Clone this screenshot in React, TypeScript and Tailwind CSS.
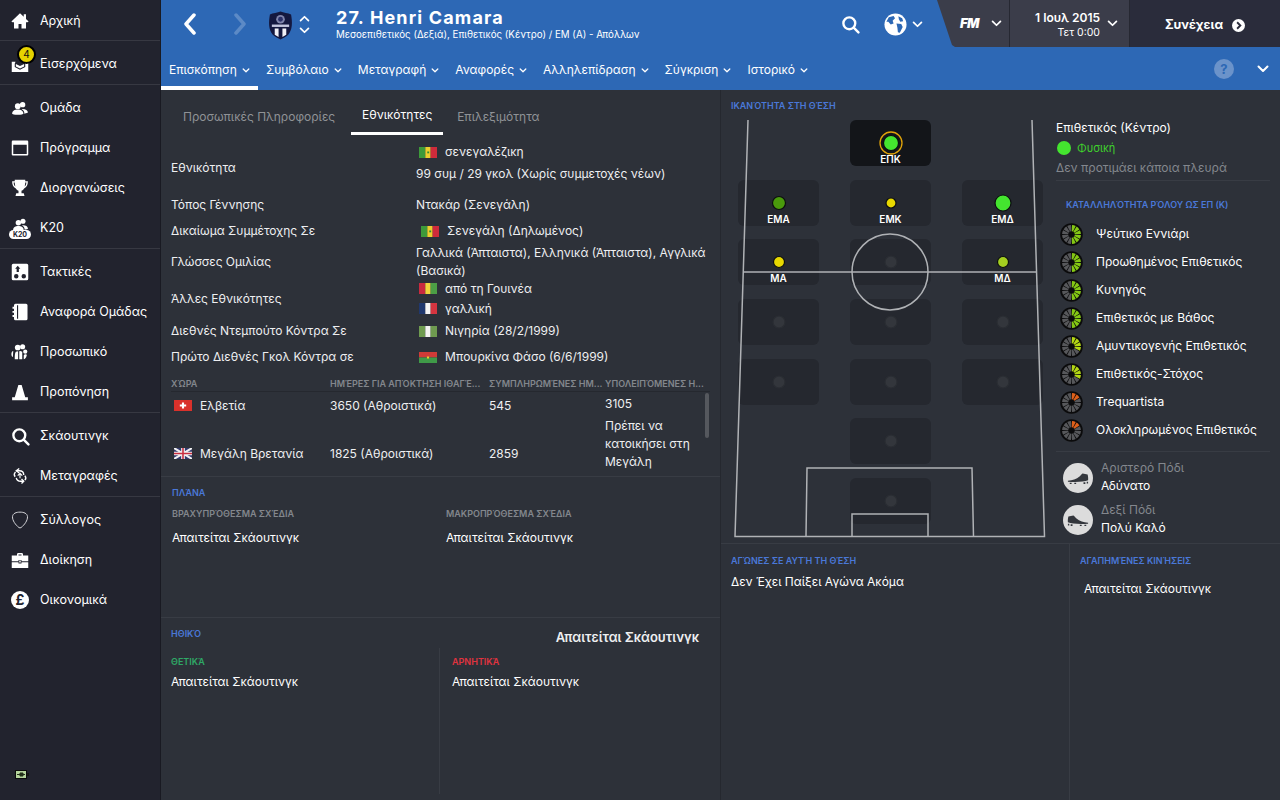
import React from "react";

const UsersGlyph = () => (
  <>
    <circle cx="15.5" cy="7.5" r="3.6" />
    <circle cx="9" cy="9.5" r="3.8" />
    <path d="M1.5 19.5c0-3.5 3.4-5.5 7.5-5.5s7.5 2 7.5 5.5c0 .6-3 1.5-7.5 1.5s-7.5-.9-7.5-1.5z" />
    <path d="M17.8 19.5c.2-2.7-1.2-4.7-3.6-6 .5-.2 1-.3 1.5-.3 3.6 0 6.8 1.7 6.8 4.6 0 .7-1.900 1.500-4.700 1.700z" />
  </>
);

const navIcons: Record<string, React.ReactNode> = {
  home: <path d="M12 1.500 0.500 12.500l1.500 1H4V22h6v-6h4v6h6v-8.500h2l1.500-1L20 9.200V3h-3v3.400z" />,
  inbox: <path d="M1 9h5l-1 2.500V16l7 3.500 7-3.500v-4.500L18 9h5v13.500H1zM6.500 12 12 14.500 17.500 12v3.200L12 18l-5.500-2.800z" fillRule="evenodd" />,
  users: <UsersGlyph />,
  calendar: <path fillRule="evenodd" d="M2.500 2h19A1.500 1.500 0 0 1 23 3.500v17a1.500 1.500 0 0 1-1.500 1.500h-19A1.500 1.500 0 0 1 1 20.500v-17A1.500 1.500 0 0 1 2.500 2zM3 7.500V20h18V7.500z" />,
  trophy: <path fillRule="evenodd" d="M5 1h14v2h3.500c0 5-1.500 8-5 9.500-.8 1.500-2 2.500-3.500 3V19h3l1 3.500H6l1-3.500h3v-3.500c-1.500-.5-2.700-1.500-3.500-3C3 11 1.500 8 1.500 3H5zM3.500 4.500c.1 2.500.8 4.200 2.300 5.400-.4-1.500-.7-3.400-.8-5.400zM20.500 4.500H19c-.1 2-.4 3.900-.8 5.400 1.500-1.200 2.200-2.900 2.300-5.400z" />,
  tactics: <path fillRule="evenodd" d="M3 1h18a2 2 0 0 1 2 2v18a2 2 0 0 1-2 2H3a2 2 0 0 1-2-2V3a2 2 0 0 1 2-2zM9 3.500 5.500 7.500h2V12h3V7.500h2zM7 14.500a3 3 0 1 0 0 6 3 3 0 0 0 0-6zM17 14.500a3 3 0 1 0 0 6 3 3 0 0 0 0-6z" />,
  report: <path fillRule="evenodd" d="M6 1h14a2 2 0 0 1 2 2v18a2 2 0 0 1-2 2H6a2 2 0 0 1-2-2v-2.500H2V16h2v-3H2v-2.500h2v-3H2V5h2V3a2 2 0 0 1 2-2zM8 3v18h1.500V3z" />,
  staff: (
    <>
      <circle cx="9" cy="6" r="3.800" />
      <circle cx="15.500" cy="5" r="3.400" />
      <circle cx="19" cy="11.500" r="2.800" />
      <path d="M3 10.500c-1.500 0-2.500 2-2.500 4.500 0 2 1 3.500 2 3.500zM5 21.500h4.500V11l-3 .5C5 13 5 17 5 21.500zM11 21.500h4V11.500l-2.500-1-1.500.5zM17 21.500c1.500 0 3-1.500 4-5 .5-1.500-1-1.500-2-1.500-1.500 0-2 1-2 2.500z" />
    </>
  ),
  cone: <path d="M9.800 2.500h4.400L19 19h3.500v4h-21v-4H5z" />,
  briefcase: <path fillRule="evenodd" d="M8 4.500C8 3 9 2.500 10 2.500h4c1 0 2 .5 2 2V6h7v7.500H14V12h-4v1.500H1V6h7zM10 4.500V6h4V4.500zM1 15h9v1.500h4V15h9v7.500H1zM11 12.800h2v2.500h-2z" />,
};

const NavIcon = ({ name }: { name: string }) => (
  <svg viewBox="0 0 24 24" className="w-[18px] h-[18px] fill-white">
    {navIcons[name]}
  </svg>
);

const SearchIcon = () => (
  <svg viewBox="0 0 24 24" className="w-[19px] h-[19px] fill-none stroke-white stroke-[3]">
    <circle cx="10.500" cy="10.500" r="7.500" />
    <path d="M16 16l6 6" strokeLinecap="round" />
  </svg>
);

const TransferIcon = () => (
  <svg viewBox="0 0 24 24" className="w-[18px] h-[20px] fill-none stroke-white stroke-[1.800]">
    <path d="M11 2 7 5l4 3" />
    <path d="M7 5h4c4 0 6 2.500 6 5.500M5.500 13c-1.500-2-1.500-4.500.5-6.500" />
    <path d="M14 22l3-3-3-3" />
    <path d="M17 19h-4c-3.500 0-5.500-2-6-4.500M18.500 11.500c1.500 2 1.500 4.500 0 6" />
    <path d="M9 11.500l3-3 3 3M12 9v6" strokeWidth="1.500" />
  </svg>
);

const ShieldIcon = () => (
  <svg viewBox="0 0 24 24" className="w-[18px] h-[18px] fill-none stroke-[#d8d8dc] stroke-[1.300]">
    <path d="M12 1.500c5 0 9.500 1.500 10 6 .3 5-4 11-8.500 14.500a2.500 2.500 0 0 1-3 0C6 18.500 1.700 12.500 2 7.500c.5-4.500 5-6 10-6z" />
  </svg>
);

type SideItem = { label: string; icon: React.ReactNode };

const sideGroups: SideItem[][] = [
  [{ label: "Αρχική", icon: <NavIcon name="home" /> }],
  [{ label: "Εισερχόμενα", icon: <NavIcon name="inbox" /> }],
  [
    { label: "Ομάδα", icon: <NavIcon name="users" /> },
    { label: "Πρόγραμμα", icon: <NavIcon name="calendar" /> },
    { label: "Διοργανώσεις", icon: <NavIcon name="trophy" /> },
    {
      label: "Κ20",
      icon: (
        <div className="relative w-[22px] h-[22px] flex justify-center">
          <svg viewBox="0 0 24 24" className="w-[17px] h-[17px] fill-white -mt-[1px]">
            <UsersGlyph />
          </svg>
          <span className="absolute left-0 bottom-0 w-[22px] h-[9px] rounded-full bg-white text-[#22232e] text-[7px] leading-[9px] font-bold text-center">
            Κ20
          </span>
        </div>
      ),
    },
  ],
  [
    { label: "Τακτικές", icon: <NavIcon name="tactics" /> },
    { label: "Αναφορά Ομάδας", icon: <NavIcon name="report" /> },
    { label: "Προσωπικό", icon: <NavIcon name="staff" /> },
    { label: "Προπόνηση", icon: <NavIcon name="cone" /> },
  ],
  [
    { label: "Σκάουτινγκ", icon: <SearchIcon /> },
    { label: "Μεταγραφές", icon: <TransferIcon /> },
  ],
  [
    { label: "Σύλλογος", icon: <ShieldIcon /> },
    { label: "Διοίκηση", icon: <NavIcon name="briefcase" /> },
    {
      label: "Οικονομικά",
      icon: (
        <span className="w-[18px] h-[18px] rounded-full bg-white text-[#22232e] text-[14px] leading-[18px] font-bold text-center">
          £
        </span>
      ),
    },
  ],
];

const Sidebar = () => (
  <aside className="relative w-[161px] shrink-0 bg-[#22232e] border-r border-[#191a22]">
    {sideGroups.map((group, i) => (
      <div
        key={i}
        className={`${i === 0 ? "" : "pt-[2px] pb-[1px]"} ${i === 5 ? "" : "border-b border-[#373842]"}`}
      >
        {group.map((item) => (
          <div key={item.label} className="relative h-10 pt-[2px] flex items-center text-white text-[12.500px]">
            <span className="w-[40px] flex justify-center">{item.icon}</span>
            <span>{item.label}</span>
            {item.label === "Εισερχόμενα" && (
              <span className="absolute left-[17px] top-[2px] w-[19px] h-[19px] rounded-full bg-[#e6d200] border-2 border-black text-[#111] text-[10px] leading-[15px] text-center">
                4
              </span>
            )}
          </div>
        ))}
      </div>
    ))}
    <svg viewBox="0 0 14 9" className="absolute left-[15px] top-[770px] w-[14px] h-[9px]">
      <rect x="0.500" y="0.500" width="11" height="8" fill="#b5d49c" stroke="#0c0c0c" />
      <rect x="12" y="3" width="2" height="3" fill="#151515" />
      <path d="M2 4.500h8M5 3h3v3H5z" stroke="#223018" fill="#223018" />
    </svg>
  </aside>
);

const Chevron = ({ className }: { className: string }) => (
  <svg viewBox="0 0 12 8" className={className}>
    <path d="M1.500 1.500 6 6l4.500-4.500" fill="none" stroke="currentColor" strokeWidth="2" strokeLinecap="round" strokeLinejoin="round" />
  </svg>
);

const ClubBadge = () => (
  <svg viewBox="0 0 26 30" className="w-[25px] h-[29px]">
    <path d="M13 0.500c3 1.500 8 1.500 11 3 1.500 8 1.500 16-3 21-2.500 2.500-5.500 3.500-8 5-2.500-1.500-5.500-2.500-8-5-4.500-5-4.500-13-3-21 3-1.500 8-1.500 11-3z" fill="#14183f" />
    <circle cx="13" cy="8.500" r="4.500" fill="#7f84ab" />
    <circle cx="13" cy="8.500" r="2.500" fill="#2b3068" />
    <rect x="4" y="14" width="18" height="2.500" fill="#c3c6de" />
    <path d="M7 18h4v9l-4-2.500zM15 18h4v6.500L15 27z" fill="#f1f1f6" />
  </svg>
);

const Globe = () => (
  <svg viewBox="0 0 24 24" className="w-[23px] h-[23px]">
    <circle cx="12" cy="12" r="11.500" fill="#fff" />
    <path d="M5 4.500 10 3l1.500 2.500L9 8l1 3-3 1-2.500-3L2.500 9zM13 11l5 .5 1.500 3-3 6-2-.5-.5-4.500zM15 3.500l4 2 1 3-3 .5-1.500-2.500z" fill="#2d68b5" />
  </svg>
);

const topNav = ["Επισκόπηση", "Συμβόλαιο", "Μεταγραφή", "Αναφορές", "Αλληλεπίδραση", "Σύγκριση", "Ιστορικό"];

const Header = () => (
  <header className="h-[90px] shrink-0 bg-[#2d68b5] text-white">
    <div className="flex h-[48px]">
      <div className="flex-1 flex items-center">
        <svg viewBox="0 0 14 22" className="ml-[22px] w-[14px] h-[22px] fill-none stroke-white stroke-[3.500]" strokeLinecap="round" strokeLinejoin="round">
          <path d="M11 2 3 11l8 9" />
        </svg>
        <svg viewBox="0 0 14 22" className="ml-[36px] w-[14px] h-[22px] fill-none stroke-[#5c8ac6] stroke-[3.500]" strokeLinecap="round" strokeLinejoin="round">
          <path d="M3 2l8 9-8 9" />
        </svg>
        <div className="ml-[21px] mt-[2px]">
          <ClubBadge />
        </div>
        <div className="ml-[6px] flex flex-col gap-[5px] text-white">
          <Chevron className="w-[11px] h-[7px] rotate-180" />
          <Chevron className="w-[11px] h-[7px]" />
        </div>
        <div className="ml-[26px] mt-[2px]">
          <div className="text-[18px] leading-[20px] font-bold tracking-[1.150px]">27. Henri Camara</div>
          <div className="text-[9.750px] leading-[14px]">Μεσοεπιθετικός (Δεξιά), Επιθετικός (Κέντρο) / ΕΜ (Α) - Απόλλων</div>
        </div>
        <div className="ml-auto mr-[86px] flex items-center">
          <SearchIcon />
          <div className="ml-[24px] flex items-center gap-[5px]">
            <Globe />
            <Chevron className="w-[11px] h-[7px]" />
          </div>
        </div>
      </div>
      <div className="w-[192px] shrink-0 h-[47px] flex bg-[#3b3d4a] -ml-[72px] [clip-path:polygon(0_0,100%_0,100%_100%,18px_100%,15px_96%)]">
        <div className="pl-[23px] w-[73px] flex items-center gap-[9px] border-r border-[#262832]">
          <span className="text-[13px] font-black italic tracking-[-0.5px] w-[22px]">FM</span>
          <Chevron className="w-[11px] h-[7px]" />
        </div>
        <div className="flex-1 flex items-center justify-end pr-[11px] gap-[7px]">
          <div className="text-right pt-[1px]">
            <div className="text-[12px] leading-[17px] font-semibold">1 Ιουλ 2015</div>
            <div className="text-[10.500px] leading-[14px]">Τετ 0:00</div>
          </div>
          <Chevron className="w-[11px] h-[7px]" />
        </div>
      </div>
      <div className="w-[151px] shrink-0 h-[47px] bg-[#2a2c3b] flex items-center justify-center gap-[9px] border-l border-[#262832] pt-[3px]">
        <span className="text-[12.500px] font-bold">Συνέχεια</span>
        <svg viewBox="0 0 14 14" className="w-[13px] h-[13px]">
          <circle cx="7" cy="7" r="7" fill="#fff" />
          <path d="M5.500 3.500 9 7l-3.500 3.500" fill="none" stroke="#2a2c3b" strokeWidth="2" />
        </svg>
      </div>
    </div>
    <div className="flex h-[42px] items-stretch">
      {topNav.map((item, i) => (
        <div
          key={item}
          className={`flex items-center gap-[5px] text-[12px] px-[8px] ${i === 0 ? "border-b-4 border-white pt-[6px]" : "pt-[2px]"}`}
        >
          {item}
          <Chevron className="w-[8px] h-[5px] mt-[1px]" />
        </div>
      ))}
      <div className="ml-auto flex items-center pr-[11px]">
        <span className="w-[20px] h-[20px] rounded-full bg-[#6b93ca] text-[#2d68b5] text-[13px] font-bold text-center leading-[20px]">?</span>
        <Chevron className="ml-[23px] w-[12px] h-[8px]" />
      </div>
    </div>
  </header>
);

type FlagName = "sn" | "gn" | "fr" | "ng" | "bf" | "ch" | "gb";

const Flag = ({ name }: { name: FlagName }) => (
  <svg viewBox="0 0 17 11" preserveAspectRatio="none" className="w-[18px] h-[11px] shrink-0">
    {name === "sn" && (
      <>
        <rect width="6" height="11" fill="#3d9a3a" />
        <rect x="6" width="5" height="11" fill="#eccf2e" />
        <rect x="11" width="6" height="11" fill="#cf2b3b" />
        <rect x="7.800" y="4.500" width="1.800" height="1.800" fill="#2c8a35" />
      </>
    )}
    {name === "gn" && (
      <>
        <rect width="6" height="11" fill="#c92a3f" />
        <rect x="6" width="5" height="11" fill="#f0d43c" />
        <rect x="11" width="6" height="11" fill="#4c9e45" />
      </>
    )}
    {name === "fr" && (
      <>
        <rect width="6" height="11" fill="#20386e" />
        <rect x="6" width="5" height="11" fill="#f4f4f4" />
        <rect x="11" width="6" height="11" fill="#d63540" />
      </>
    )}
    {name === "ng" && (
      <>
        <rect width="6" height="11" fill="#6f9b50" />
        <rect x="6" width="5" height="11" fill="#f3f3f1" />
        <rect x="11" width="6" height="11" fill="#6f9b50" />
      </>
    )}
    {name === "bf" && (
      <>
        <rect width="17" height="5.500" fill="#cf3b38" />
        <rect y="5.500" width="17" height="5.500" fill="#3f9a48" />
        <rect x="7.500" y="4.500" width="2" height="2" fill="#eccf2e" />
      </>
    )}
    {name === "ch" && (
      <>
        <rect width="17" height="11" fill="#d9312b" />
        <path d="M7.500 2.500h2v2h2v2h-2v2h-2v-2h-2v-2h2z" fill="#fff" />
      </>
    )}
    {name === "gb" && (
      <>
        <rect width="17" height="11" fill="#33396e" />
        <path d="M0 0l17 11M17 0 0 11" stroke="#f2f2f2" strokeWidth="2" />
        <path d="M8.500 0v11M0 5.500h17" stroke="#f2f2f2" strokeWidth="3.500" />
        <path d="M8.500 0v11M0 5.500h17" stroke="#c93042" strokeWidth="1.500" />
      </>
    )}
  </svg>
);

const FlagLine = ({ name, children, className }: { name: FlagName; children: React.ReactNode; className?: string }) => (
  <div className={`flex items-center ${className ?? "pl-[3px]"}`}>
    <Flag name={name} />
    <span className="ml-[8px]">{children}</span>
  </div>
);

const SectionTitle = ({ children, className }: { children: React.ReactNode; className?: string }) => (
  <div className={`text-[9px] leading-[12px] font-semibold text-[#4a78d8] ${className ?? ""}`}>{children}</div>
);

const Row = ({ label, h, children, start }: { label: string; h: string; children: React.ReactNode; start?: boolean }) => (
  <div className={`flex pl-[10px] ${h}`}>
    <div className="w-[245px] shrink-0 self-center">{label}</div>
    <div className={`flex-1 pr-[8px] ${start ? "" : "self-center"}`}>{children}</div>
  </div>
);

const LeftPanel = () => (
  <section className="w-[560px] shrink-0 border-r border-[#25282f] text-[12px] text-[#eeeff1] flex flex-col">
    <div className="h-[45px] shrink-0 flex pl-[10px]">
      <div className="px-[12px] pt-[9px] flex items-center text-[#8f9296]">Προσωπικές Πληροφορίες</div>
      <div className="ml-[4px] w-[92px] flex items-center justify-center text-white border-b-[3px] border-white pt-[7px]">Εθνικότητες</div>
      <div className="ml-[14px] pt-[9px] flex items-center text-[#8f9296]">Επιλεξιμότητα</div>
    </div>
    <div className="h-[7px] shrink-0" />
    <Row label="Εθνικότητα" h="h-[52px]" start>
      <div className="-mt-[1px]">
        <FlagLine name="sn" className="h-[22px] pl-[3px]">σενεγαλέζικη</FlagLine>
        <div className="h-[22px] leading-[22px]">99 συμ / 29 γκολ (Χωρίς συμμετοχές νέων)</div>
      </div>
    </Row>
    <Row label="Τόπος Γέννησης" h="h-[22px]">Ντακάρ (Σενεγάλη)</Row>
    <Row label="Δικαίωμα Συμμέτοχης Σε" h="h-[30px]">
      <FlagLine name="sn" className="pl-[5px]">Σενεγάλη (Δηλωμένος)</FlagLine>
    </Row>
    <Row label="Γλώσσες Ομιλίας" h="h-[32px]">
      <div className="leading-[18px] -mt-[1px]">Γαλλικά (Άπταιστα), Ελληνικά (Άπταιστα), Αγγλικά (Βασικά)</div>
    </Row>
    <Row label="Άλλες Εθνικότητες" h="h-[42px]">
      <div className="-mt-[1px]">
        <FlagLine name="gn" className="h-[20px] pl-[3px]">από τη Γουινέα</FlagLine>
        <FlagLine name="fr" className="h-[20px] pl-[3px]">γαλλική</FlagLine>
      </div>
    </Row>
    <Row label="Διεθνές Ντεμπούτο Κόντρα Σε" h="h-[22px]">
      <FlagLine name="ng">Νιγηρία (28/2/1999)</FlagLine>
    </Row>
    <Row label="Πρώτο Διεθνές Γκολ Κόντρα σε" h="h-[30px]">
      <FlagLine name="bf">Μπουρκίνα Φάσο (6/6/1999)</FlagLine>
    </Row>

    <div className="mt-[3px] mx-[10px] h-[17px] pt-[2px] grid grid-cols-[159px_159px_116px_1fr] text-[9px] leading-[14px] font-semibold text-[#83878d] border-b border-[#25282f]">
      <span>ΧΏΡΑ</span>
      <span>ΗΜΈΡΕΣ ΓΙΑ ΑΠΌΚΤΗΣΗ ΙΘΑΓΈ...</span>
      <span>ΣΥΜΠΛΗΡΩΜΈΝΕΣ ΗΜ...</span>
      <span>ΥΠΟΛΕΙΠΌΜΕΝΕΣ Η...</span>
    </div>
    <div className="relative mx-[10px] h-[80px] overflow-hidden">
      <div className="grid grid-cols-[159px_159px_116px_110px] h-[26px] pt-[1px] items-center">
        <FlagLine name="ch">Ελβετία</FlagLine>
        <span>3650 (Αθροιστικά)</span>
        <span>545</span>
        <span className="-mt-[4px]">3105</span>
      </div>
      <div className="grid grid-cols-[159px_159px_116px_110px] h-[71px] items-center">
        <FlagLine name="gb">Μεγάλη Βρετανία</FlagLine>
        <span>1825 (Αθροιστικά)</span>
        <span>2859</span>
        <span className="self-start -mt-[1px] w-[92px] leading-[18px]">Πρέπει να κατοικήσει στη Μεγάλη</span>
      </div>
      <div className="absolute right-[1px] top-[1px] w-[4px] h-[45px] rounded-sm bg-[#55585e]" />
    </div>

    <div className="mt-[4px] h-[142px] shrink-0 border-t border-[#383c44] border-b px-[11px] pt-[10px]">
      <SectionTitle>ΠΛΆΝΑ</SectionTitle>
      <div className="grid grid-cols-[274px_1fr] mt-[9px]">
        <div className="text-[9px] leading-[12px] font-semibold text-[#83878d]">ΒΡΑΧΥΠΡΌΘΕΣΜΑ ΣΧΈΔΙΑ</div>
        <div className="text-[9px] leading-[12px] font-semibold text-[#83878d]">ΜΑΚΡΟΠΡΌΘΕΣΜΑ ΣΧΈΔΙΑ</div>
        <div className="mt-[9px] leading-[18px] text-white">Απαιτείται Σκάουτινγκ</div>
        <div className="mt-[9px] leading-[18px] text-white">Απαιτείται Σκάουτινγκ</div>
      </div>
    </div>

    <div className="flex-1 px-[10px] pt-[10px] pb-[6px] flex flex-col">
      <div className="flex justify-between pr-[11px] h-[20px]">
        <SectionTitle>ΗΘΙΚΌ</SectionTitle>
        <span className="text-[13px] font-semibold leading-[18px]">Απαιτείται Σκάουτινγκ</span>
      </div>
      <div className="flex-1 grid grid-cols-[269px_1fr]">
        <div className="border-r border-[#383c44] pt-[8px]">
          <div className="text-[9px] leading-[12px] font-semibold text-[#2fa866]">ΘΕΤΙΚΆ</div>
          <div className="mt-[5px] leading-[18px] text-white">Απαιτείται Σκάουτινγκ</div>
        </div>
        <div className="pl-[12px] pt-[8px]">
          <div className="text-[9px] leading-[12px] font-semibold text-[#e0333f]">ΑΡΝΗΤΙΚΆ</div>
          <div className="mt-[5px] leading-[18px] text-white">Απαιτείται Σκάουτινγκ</div>
        </div>
      </div>
    </div>
  </section>
);

type SlotData = { label?: string; r?: number; color?: string; ring?: boolean; col?: string };

const slots: SlotData[] = [
  { col: "col-start-2", label: "ΕΠΚ", r: 7.500, color: "#44e52f", ring: true },
  { col: "col-start-1", label: "ΕΜΑ", r: 6.500, color: "#4a9a0c" },
  { label: "ΕΜΚ", r: 5, color: "#e8d800" },
  { label: "ΕΜΔ", r: 8, color: "#44e52f" },
  { label: "ΜΑ", r: 5.500, color: "#e8d800" },
  {},
  { label: "ΜΔ", r: 5.500, color: "#a4cf20" },
  {},
  {},
  {},
  {},
  {},
  {},
  { col: "col-start-2" },
  { col: "col-start-2" },
];

const Slot = ({ slot }: { slot: SlotData }) => {
  const { label, r = 6, color = "#33363c", ring } = slot;
  return (
    <div
      className={`relative h-[46px] rounded-md flex flex-col items-center ${ring ? "bg-[#131519]" : "bg-[#25282f]"} ${slot.col ?? ""}`}
    >
      <svg viewBox="-12 -12 24 24" className="absolute left-[28.500px] top-[11px] w-[24px] h-[24px]">
        {ring && <circle r="11" fill="none" stroke="#e0a30a" strokeWidth="1.300" />}
        <circle r={r} fill={color} stroke={label ? "#0c0e10" : "#2a2d33"} strokeWidth="1.200" />
      </svg>
      {label && (
        <span className="absolute bottom-[1px] text-[10px] leading-[12px] font-semibold text-white">{label}</span>
      )}
    </div>
  );
};

const PitchLines = () => (
  <svg viewBox="0 0 329 420" className="absolute left-0 top-0 w-[329px] h-[420px] fill-none stroke-[#bfc1c4] stroke-[1.500] opacity-90 pointer-events-none">
    <path d="M27 0 14 416.500H323.500L311 0" />
    <path d="M22 152H316" />
    <circle cx="169" cy="152" r="38" />
    <path d="M85 416.500 86 348H251L252.500 416.500" />
    <path d="M131 416.500V394H207V416.500" />
  </svg>
);

const roles: { name: string; on: number; color: string }[] = [
  { name: "Ψεύτικο Εννιάρι", on: 6, color: "#84c814" },
  { name: "Προωθημένος Επιθετικός", on: 6, color: "#84c814" },
  { name: "Κυνηγός", on: 6, color: "#84c814" },
  { name: "Επιθετικός με Βάθος", on: 6, color: "#84c814" },
  { name: "Αμυντικογενής Επιθετικός", on: 4, color: "#b4d814" },
  { name: "Επιθετικός-Στόχος", on: 4, color: "#b4d814" },
  { name: "Trequartista", on: 2, color: "#e0601a" },
  { name: "Ολοκληρωμένος Επιθετικός", on: 2, color: "#e0601a" },
];

const wedge = (i: number) => {
  const pt = (deg: number, r: number) => {
    const a = ((deg - 90) * Math.PI) / 180;
    return `${(r * Math.cos(a)).toFixed(2)} ${(r * Math.sin(a)).toFixed(2)}`;
  };
  const a0 = i * 30 + 3;
  const a1 = i * 30 + 27;
  return `M${pt(a0, 3.2)}L${pt(a0, 9)}A9 9 0 0 1 ${pt(a1, 9)}L${pt(a1, 3.2)}Z`;
};

const Wheel = ({ on, color }: { on: number; color: string }) => (
  <svg viewBox="-11 -11 22 22" className="w-[23px] h-[23px] shrink-0">
    <circle r="10.800" fill="#0b0b0c" />
    {Array.from({ length: 12 }).map((_, i) => (
      <path key={i} d={wedge(i)} fill={i < on ? color : "#57585b"} />
    ))}
  </svg>
);

const Boot = ({ flip }: { flip?: boolean }) => (
  <span className="w-[30px] h-[30px] rounded-full bg-[#dcdcdc] shrink-0 flex items-center justify-center">
    <svg viewBox="0 0 24 12" className={`w-[22px] h-[11px] fill-[#33363c] ${flip ? "-scale-x-100" : ""}`}>
      <path d="M1 8.500c5-.5 9-1.500 13-5 1-1 2-2.500 3-3l5.500 1c.5 2 .8 4.500.5 6.500-4 1.800-14 2.300-22 1.500zM3 10.500h2v1.500H3zM8 10.500h2v1.500H8zM18 10h2v2h-2zM21.500 9.500h1.500v2h-1.500z" />
    </svg>
  </span>
);

const RightPanel = () => (
  <section className="flex-1 flex flex-col text-[12px] text-white">
    <div className="h-[454px] shrink-0 border-b border-[#383c44] flex">
      <div className="w-[329px] shrink-0">
        <SectionTitle className="pl-[10px] pt-[10px] h-[30px]">ΙΚΑΝΌΤΗΤΑ ΣΤΗ ΘΈΣΗ</SectionTitle>
        <div className="relative h-[420px] pl-[17px]">
          <div className="grid grid-cols-[81px_81px_81px] gap-x-[31px] auto-rows-[46px] gap-y-[13.670px]">
            {slots.map((slot, i) => (
              <Slot key={i} slot={slot} />
            ))}
          </div>
          <PitchLines />
        </div>
      </div>
      <div className="flex-1 pl-[6px] pr-[10px]">
        <div className="pt-[28px] leading-[20px]">Επιθετικός (Κέντρο)</div>
        <div className="h-[20px] flex items-center text-[11px] text-[#3fd02c]">
          <span className="w-[14px] h-[14px] rounded-full bg-[#44e52f] mr-[6px] ml-[1px]" />
          Φυσική
        </div>
        <div className="h-[20px] leading-[20px] text-[#83878d]">Δεν προτιμάει κάποια πλευρά</div>
        <div className="mt-[2px] border-t border-[#383c44]" />
        <SectionTitle className="pl-[10px] pt-[18px] h-[39px]">ΚΑΤΑΛΛΗΛΌΤΗΤΑ ΡΌΛΟΥ ΩΣ ΕΠ (Κ)</SectionTitle>
        {roles.map((role) => (
          <div key={role.name} className="h-[28px] flex items-center pl-[4px]">
            <Wheel on={role.on} color={role.color} />
            <span className="ml-[13px] whitespace-nowrap">{role.name}</span>
          </div>
        ))}
        <div className="mt-[7px] border-t border-[#383c44]" />
        <div className="mt-[5px] h-[42px] flex items-center pl-[7px] gap-[8px]">
          <Boot />
          <div className="leading-[18px] -mt-[3px]">
            <div className="text-[#83878d]">Αριστερό Πόδι</div>
            <div>Αδύνατο</div>
          </div>
        </div>
        <div className="h-[42px] flex items-center pl-[7px] gap-[8px]">
          <Boot flip />
          <div className="leading-[18px] -mt-[3px]">
            <div className="text-[#83878d]">Δεξί Πόδι</div>
            <div>Πολύ Καλό</div>
          </div>
        </div>
      </div>
    </div>
    <div className="flex-1 flex">
      <div className="w-[349px] shrink-0 border-r border-[#383c44] pl-[10px] pt-[11px]">
        <SectionTitle>ΑΓΏΝΕΣ ΣΕ ΑΥΤΉ ΤΗ ΘΈΣΗ</SectionTitle>
        <div className="mt-[6px] leading-[18px]">Δεν Έχει Παίξει Αγώνα Ακόμα</div>
      </div>
      <div className="flex-1 pl-[10px] pt-[11px]">
        <SectionTitle>ΑΓΑΠΗΜΈΝΕΣ ΚΙΝΉΣΕΙΣ</SectionTitle>
        <div className="mt-[13px] pl-[4px] leading-[18px]">Απαιτείται Σκάουτινγκ</div>
      </div>
    </div>
  </section>
);

export default function App() {
  return (
    <div className="w-[1280px] h-[800px] overflow-hidden flex bg-[#2d3139] [font-family:Inter,sans-serif]">
      <Sidebar />
      <main className="flex-1 min-w-0 flex flex-col">
        <Header />
        <div className="flex-1 min-h-0 flex">
          <LeftPanel />
          <RightPanel />
        </div>
      </main>
    </div>
  );
}
